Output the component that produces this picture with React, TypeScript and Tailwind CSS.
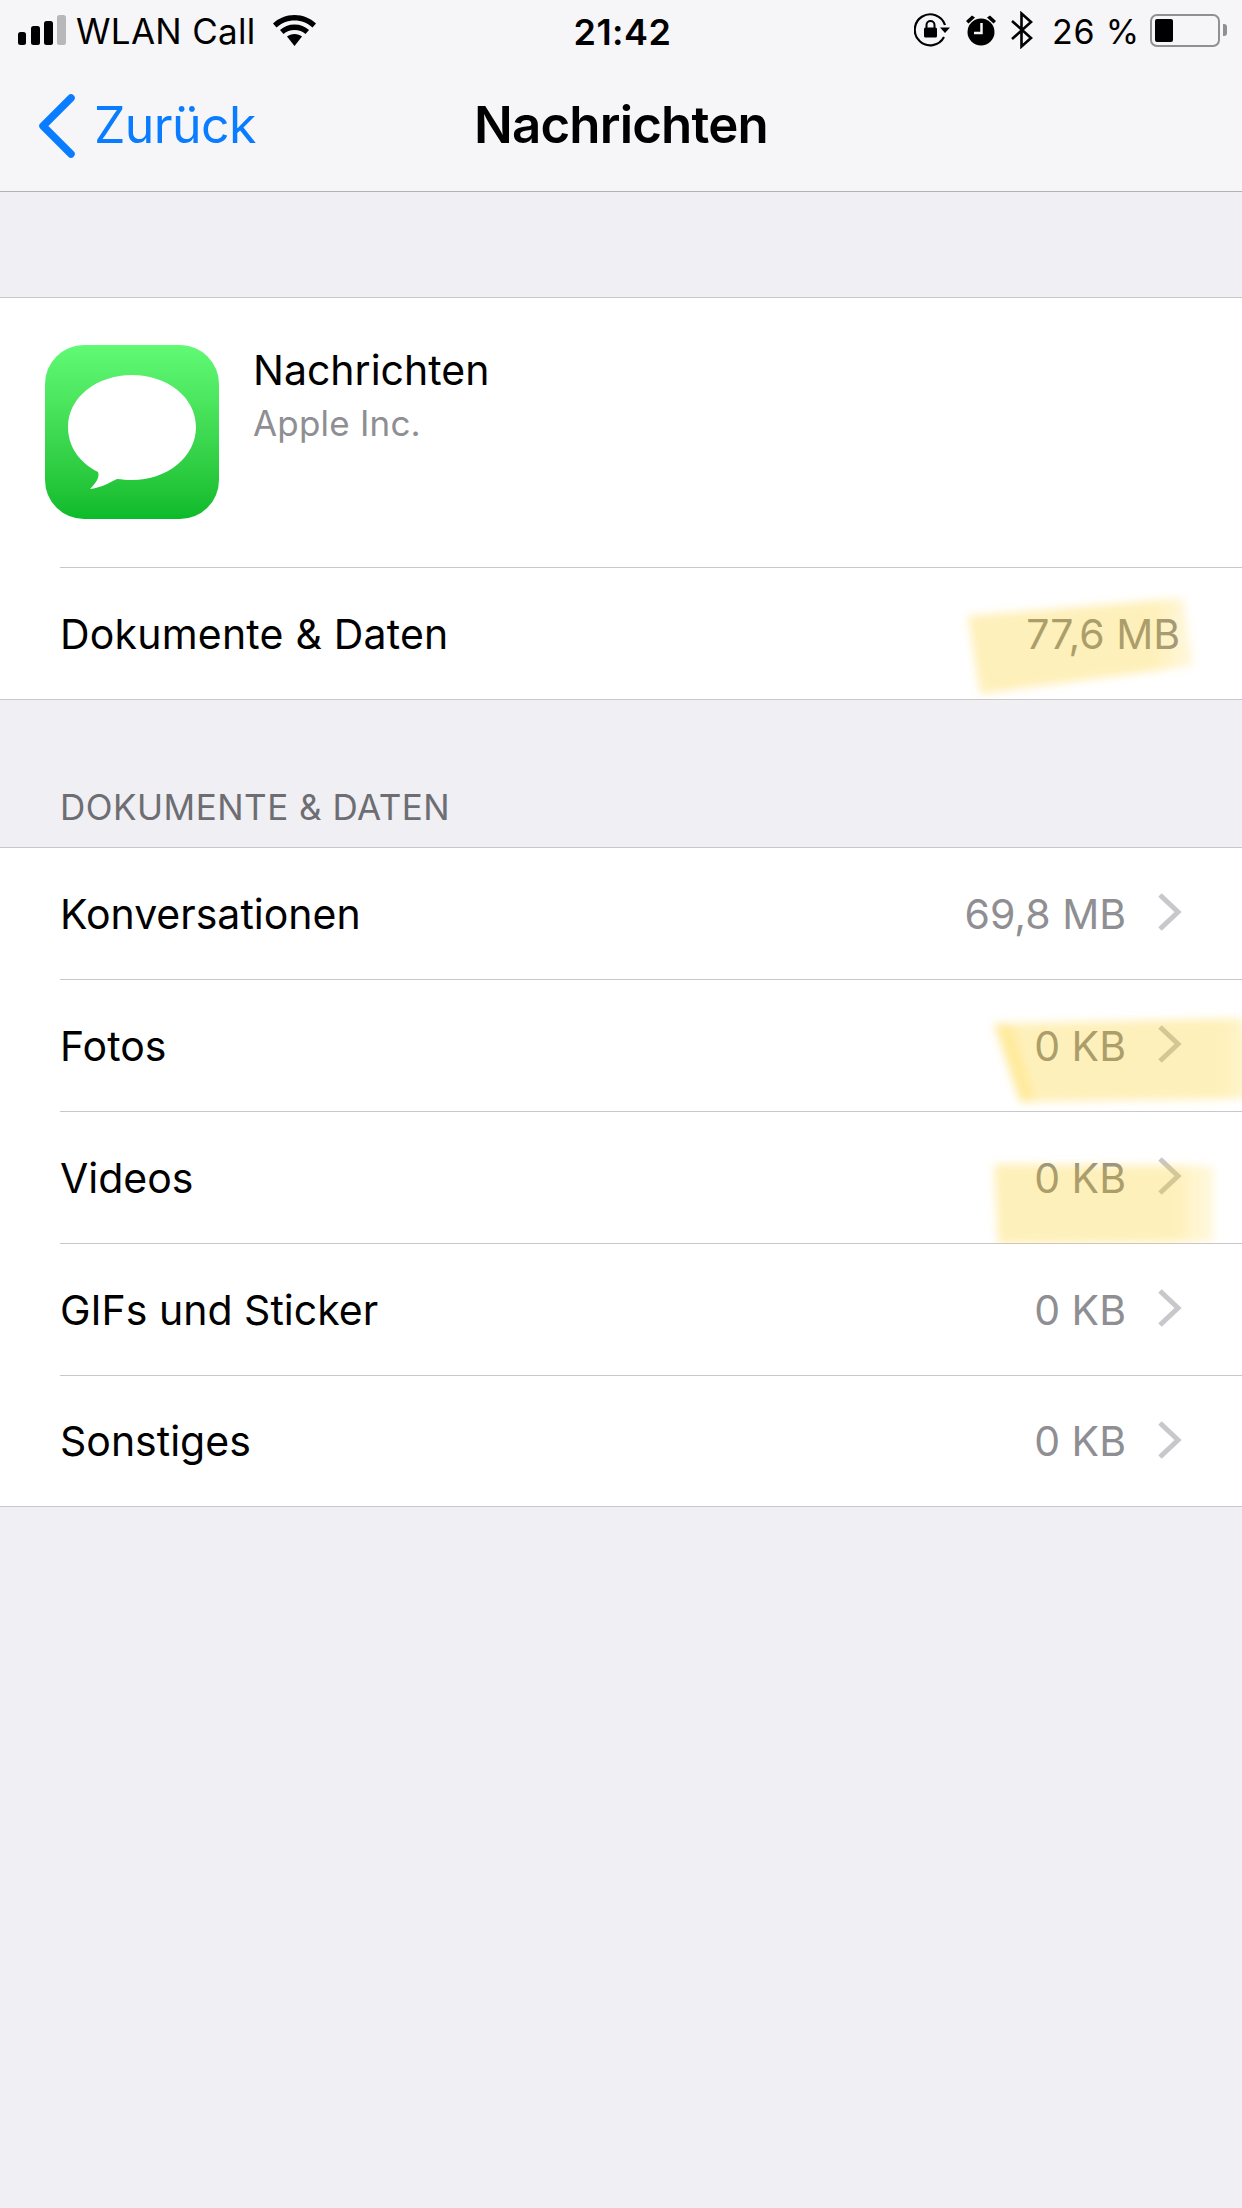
const font = { fontFamily: "Inter, 'Liberation Sans', sans-serif" };

function Highlight({ children }: { children: React.ReactNode }) {
  return (
    <svg
      className="pointer-events-none absolute top-0 left-0 h-[132px] w-[1242px]"
      viewBox="0 0 1242 132"
    >
      <defs>
        <filter id="soft" x="-10%" y="-20%" width="120%" height="140%">
          <feGaussianBlur stdDeviation="4.500" />
        </filter>
        <linearGradient id="marker" x1="0" y1="0" x2="1" y2="0">
          <stop offset="0" stopColor="#fcc800" stopOpacity="0.27" />
          <stop offset="0.82" stopColor="#fcc800" stopOpacity="0.27" />
          <stop offset="1" stopColor="#fcc800" stopOpacity="0.12" />
        </linearGradient>
      </defs>
      <g filter="url(#soft)">{children}</g>
    </svg>
  );
}

function Chevron() {
  return (
    <svg className="mb-[3px] h-[40px] w-[25px] shrink-0" viewBox="0 0 25 40" fill="none">
      <path d="M3 3 L21 20 L3 37" stroke="#c7c7cc" strokeWidth="5" />
    </svg>
  );
}

type RowProps = {
  label: string;
  value: string;
  last?: boolean;
  children?: React.ReactNode;
};

function Row({ label, value, last, children }: RowProps) {
  return (
    <div className={`relative overflow-hidden pl-[60px] ${last ? "h-[130px]" : "h-[132px]"}`}>
      <div
        className={`flex h-full items-center justify-between pr-[60px] ${last ? "" : "border-b-[1.5px] border-[#c8c7cc]"}`}
      >
        <span className="pt-[2px] text-[41px] tracking-[0px] text-black">{label}</span>
        <div className="flex items-center gap-[31px]">
          <span className="pt-[2px] text-[41px] tracking-[0px] text-[#8e8e93]">{value}</span>
          <Chevron />
        </div>
      </div>
      {children}
    </div>
  );
}

function StatusBar() {
  return (
    <div className="grid h-[60px] grid-cols-[1fr_auto_1fr] items-center pr-[15px] pl-[18px] text-[35px] text-black">
      <div className="flex items-center">
        <svg className="h-[30px] w-[48px]" viewBox="0 0 48 30">
          <rect x="0" y="17" width="8" height="13" rx="2.500" fill="#000" />
          <rect x="13" y="11" width="9" height="19" rx="2.500" fill="#000" />
          <rect x="26" y="6" width="9" height="24" rx="2.500" fill="#000" />
          <rect x="39" y="0" width="9" height="30" rx="2.500" fill="#b8b8ba" />
        </svg>
        <span className="mt-[3px] ml-[10px] tracking-[0.3px]">WLAN Call</span>
        <svg className="ml-[17px] h-[31px] w-[43px]" viewBox="0 0 43 31">
          <path d="M21.500 0C13 0 6 3 0 8.500L3.500 12.500C8.500 8 14.500 5.500 21.500 5.500C28.500 5.500 34.500 8 39.500 12.500L43 8.500C37 3 30 0 21.500 0Z" fill="#000" />
          <path d="M21.500 9.500C15.500 9.500 11 11.500 7 15L10.500 19C13.500 16.500 17 15 21.500 15C26 15 29.500 16.500 32.500 19L36 15C32 11.500 27.500 9.500 21.500 9.500Z" fill="#000" />
          <path d="M21.500 19C18.500 19 16 20 14 21.500L21.500 31L29 21.500C27 20 24.500 19 21.500 19Z" fill="#000" />
        </svg>
      </div>
      <span className="mt-[3px] text-[36px] font-semibold tracking-[0.5px]">21:42</span>
      <div className="flex items-center justify-end">
        <svg className="h-[34px] w-[36px]" viewBox="0 0 36 34" fill="none">
          <path d="M30 24A15.500 15.500 0 1 1 31 12" stroke="#000" strokeWidth="2.200" />
          <path d="M26 14.500H36L31 20Z" fill="#000" />
          <rect x="10" y="14.500" width="13" height="10" rx="1.500" fill="#000" />
          <path d="M12.500 15V12A4 4 0 0 1 20.500 12V15" stroke="#000" strokeWidth="2" />
        </svg>
        <svg className="ml-[16px] h-[32px] w-[30px]" viewBox="0 0 30 32">
          <circle cx="15" cy="18" r="13.500" fill="#000" />
          <path d="M0 7L6 1.500L9 3.500L2.500 9.500Z M30 7L24 1.500L21 3.500L27.500 9.500Z" fill="#000" />
          <path d="M15.500 9V19H8" stroke="#f5f5f8" strokeWidth="2.500" fill="none" />
        </svg>
        <svg className="ml-[15px] h-[38px] w-[22px]" viewBox="0 0 22 38" fill="none">
          <path d="M1 10L20 27L10.500 35.500V2.500L20 11L1 28" stroke="#000" strokeWidth="2.600" />
        </svg>
        <span className="mt-[3px] ml-[19px] text-[34px] tracking-[0.8px]">26 %</span>
        <div className="ml-[10px] flex items-center">
          <div className="h-[33px] w-[70px] rounded-[7px] border-[2.500px] border-[#909092] p-[3px]">
            <div className="h-full w-[18px] rounded-[2px] bg-black" />
          </div>
          <div className="ml-[3px] h-[12px] w-[4px] rounded-r-[3px] bg-[#909092]" />
        </div>
      </div>
    </div>
  );
}

function NavBar() {
  return (
    <div className="grid h-[132px] grid-cols-[1fr_auto_1fr] items-center border-b-[1.5px] border-[#b2b2b2]">
      <div className="flex items-center pl-[39px] text-[#0a7cff]">
        <svg className="h-[64px] w-[36px]" viewBox="0 0 36 64" fill="none">
          <path d="M32 4L4 32L32 60" stroke="#0a7cff" strokeWidth="7.500" strokeLinecap="round" strokeLinejoin="round" />
        </svg>
        <span className="ml-[19px] text-[50px] tracking-[-0.6px]">Zurück</span>
      </div>
      <span className="text-[51px] font-semibold tracking-[-0.8px] text-black">Nachrichten</span>
      <div />
    </div>
  );
}

function MessagesIcon() {
  return (
    <div className="h-[174px] w-[174px] shrink-0 rounded-[39px] bg-gradient-to-b from-[#61fa75] to-[#0abb29]">
      <svg className="h-full w-full" viewBox="0 0 174 174">
        <path
          d="M87 30C122 30 151 52 151 82C151 112 122 135 87 135C81 135 77 134.500 72 134C64 138 55 143 45 144C51 138 55 132 53 127C35 118 23 102 23 82C23 52 52 30 87 30Z"
          fill="#fff"
        />
      </svg>
    </div>
  );
}

export default function App() {
  return (
    <div className="flex min-h-[2208px] w-[1242px] flex-col bg-[#efeff4]" style={font}>
      <header className="bg-[#f6f6f8]">
        <StatusBar />
        <NavBar />
      </header>

      <section className="mt-[105px] border-y-[1.5px] border-[#c8c7cc] bg-white">
        <div className="flex h-[269px] items-start pt-[47px] pl-[45px]">
          <MessagesIcon />
          <div className="ml-[34px]">
            <p className="pt-[1px] text-[41px] leading-[48px] tracking-[0px] text-black">Nachrichten</p>
            <p className="mt-[8px] text-[35px] leading-[42px] tracking-[0.2px] text-[#8e8e93]">Apple Inc.</p>
          </div>
        </div>
        <div className="ml-[60px] border-t-[1.5px] border-[#c8c7cc]" />
        <div className="relative flex h-[131px] items-center justify-between overflow-hidden pr-[62px] pl-[60px]">
          <span className="pt-[2px] text-[41px] tracking-[0.2px] text-black">Dokumente &amp; Daten</span>
          <span className="pt-[2px] text-[41px] tracking-[0px] text-[#8e8e93]">77,6 MB</span>
          <Highlight>
            <polygon points="968,48 1183,30 1194,98 980,126" fill="url(#marker)" />
          </Highlight>
        </div>
      </section>

      <p className="mt-[81px] h-[66px] pl-[60px] text-[35px] tracking-[0.5px] text-[#6d6d72] uppercase">
        Dokumente &amp; Daten
      </p>

      <section className="border-y-[1.5px] border-[#c8c7cc] bg-white">
        <Row label="Konversationen" value="69,8 MB" />
        <Row label="Fotos" value="0 KB">
          <Highlight>
            <polygon points="994,44 1242,38 1270,118 1020,122" fill="url(#marker)" />
            <polygon points="994,44 1012,44 1035,120 1020,122" fill="#fcc800" fillOpacity="0.16" />
          </Highlight>
        </Row>
        <Row label="Videos" value="0 KB">
          <Highlight>
            <polygon points="994,52 1214,54 1214,130 998,132" fill="url(#marker)" />
          </Highlight>
        </Row>
        <Row label="GIFs und Sticker" value="0 KB" />
        <Row label="Sonstiges" value="0 KB" last />
      </section>
    </div>
  );
}
